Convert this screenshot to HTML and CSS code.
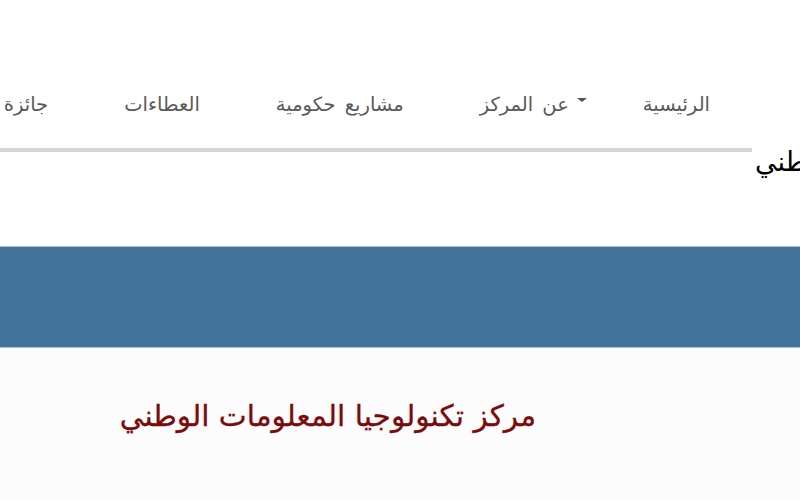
FILE: index.html
```html
<!DOCTYPE html>
<html lang="ar">
<head>
<meta charset="utf-8">
<link rel="stylesheet" href="styles.css">
</head>
<body>
<header class="header">
  <nav class="nav">
    <ul class="menu">
      <li class="item">الرئيسية</li>
      <li class="item dropdown"><span class="caret"></span>عن المركز</li>
      <li class="item">مشاريع حكومية</li>
      <li class="item">العطاءات</li>
      <li class="item">جائزة الملك</li>
    </ul>
  </nav>
  <div class="logo">مركز تكنولوجيا المعلومات الوطني</div>
</header>
<section class="band"></section>
<main class="content">
  <h1 class="title">مركز تكنولوجيا المعلومات الوطني</h1>
</main>
</body>
</html>
```
FILE: styles.css
```css
html, body {
  margin: 0;
  padding: 0;
  height: 100%;
  overflow: hidden;
  background: #fcfcfc;
  font-family: "DejaVu Sans", sans-serif;
}
.header {
  display: flex;
  align-items: flex-start;
  height: 246px;
  background: #ffffff;
  width: 800px;
}
.nav {
  flex: 0 0 752px;
  overflow: hidden;
  margin-top: 84px;
}
.menu {
  direction: rtl;
  display: flex;
  margin: 0;
  padding: 0 4px 0 0;
  list-style: none;
  border-bottom: 4px solid #dcd3d6;
  height: 64px;
}
.item {
  flex-shrink: 0;
  padding: 9px 38px 0;
  font-size: 19.5px;
  word-spacing: 3px;
  color: #5a5a5a;
  white-space: nowrap;
}
.dropdown {
  display: flex;
  align-items: flex-start;
  padding-right: 18px;
}
.caret {
  width: 0;
  height: 0;
  border-left: 5px solid transparent;
  border-right: 5px solid transparent;
  border-top: 4px solid #555;
  margin: 5px 0 0 8px;
}
.logo {
  flex-shrink: 0;
  direction: rtl;
  white-space: nowrap;
  margin-left: 3px;
  margin-top: 146px;
  font-size: 27px;
  color: #000;
}
.band {
  height: 100px;
  background: #41739b;
  border-top: 1px solid #a9bfd4;
  border-bottom: 1px solid #a9bfd4;
}
.content {
  direction: rtl;
  background: #fcfcfc;
  padding: 51px 264px 0 0;
}
.title {
  margin: 0;
  font-size: 29.6px;
  font-weight: normal;
  color: #7a0b0b;
  white-space: nowrap;
  -webkit-text-stroke: 0.3px #7a0b0b;
}
```
